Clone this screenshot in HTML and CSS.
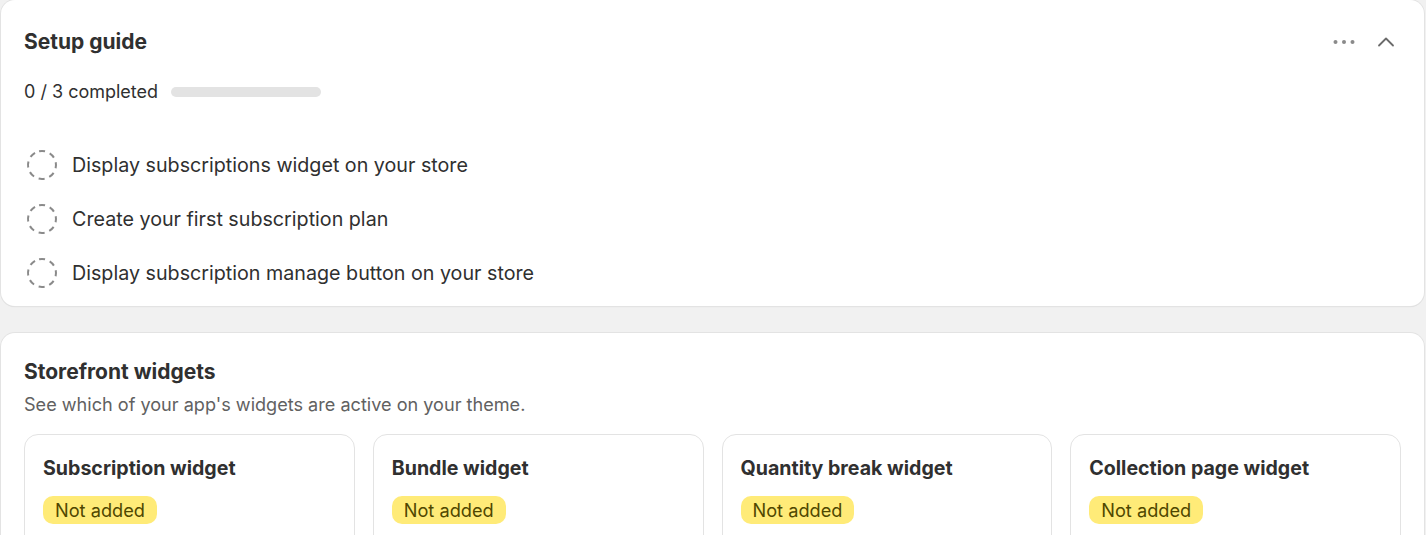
FILE: index.html
```html
<!DOCTYPE html>
<html>
<head>
<meta charset="utf-8">
<link rel="stylesheet" href="styles.css">
</head>
<body>
<div class="page">
  <section class="card setup">
    <div class="setup-head">
      <h2 class="title">Setup guide</h2>
      <div class="head-actions">
        <button class="icon-btn" aria-label="More">
          <svg width="30" height="30" viewBox="0 0 30 30"><circle cx="6.5" cy="15" r="2" fill="#8a8a8a"/><circle cx="15" cy="15" r="2" fill="#8a8a8a"/><circle cx="23.5" cy="15" r="2" fill="#8a8a8a"/></svg>
        </button>
        <button class="icon-btn" aria-label="Collapse">
          <svg width="20" height="20" viewBox="0 0 20 20"><path d="M3 13.5 L10 6.5 L17 13.5" fill="none" stroke="#6b6b6b" stroke-width="1.8" stroke-linecap="round" stroke-linejoin="round"/></svg>
        </button>
      </div>
    </div>
    <div class="progress-row">
      <span>0 / 3 completed</span>
      <div class="progress"></div>
    </div>
    <ul class="steps">
      <li><span class="dash-circle"><svg width="32" height="32" viewBox="0 0 32 32"><circle cx="16" cy="16" r="14" fill="none" stroke="#8a8a8a" stroke-width="2" stroke-dasharray="6 5" transform="rotate(-102 16 16)"/></svg></span>Display subscriptions widget on your store</li>
      <li><span class="dash-circle"><svg width="32" height="32" viewBox="0 0 32 32"><circle cx="16" cy="16" r="14" fill="none" stroke="#8a8a8a" stroke-width="2" stroke-dasharray="6 5" transform="rotate(-102 16 16)"/></svg></span>Create your first subscription plan</li>
      <li><span class="dash-circle"><svg width="32" height="32" viewBox="0 0 32 32"><circle cx="16" cy="16" r="14" fill="none" stroke="#8a8a8a" stroke-width="2" stroke-dasharray="6 5" transform="rotate(-102 16 16)"/></svg></span>Display subscription manage button on your store</li>
    </ul>
  </section>

  <section class="card widgets">
    <h2 class="title">Storefront widgets</h2>
    <p class="subtitle">See which of your app's widgets are active on your theme.</p>
    <div class="widget-grid">
      <div class="widget"><h3>Subscription widget</h3><span class="badge">Not added</span></div>
      <div class="widget"><h3>Bundle widget</h3><span class="badge">Not added</span></div>
      <div class="widget"><h3>Quantity break widget</h3><span class="badge">Not added</span></div>
      <div class="widget"><h3>Collection page widget</h3><span class="badge">Not added</span></div>
    </div>
  </section>
</div>
</body>
</html>
```

FILE: styles.css
```css
* { box-sizing: border-box; }
html, body { margin: 0; padding: 0; }
body {
  background: #f1f1f1;
  font-family: Inter, "Noto Sans", sans-serif;
  color: #303030;
}
.page {
  padding: 0 2px 0 1px;
  display: flex;
  flex-direction: column;
  gap: 27px;
}
.card {
  background: #fff;
  border-radius: 14px;
  box-shadow: 0 0 0 1px #e3e3e3, 0 1px 1px rgba(0,0,0,0.12);
  padding: 23px 23px;
}
.title {
  margin: 0;
  font-size: 21px;
  font-weight: 700;
  line-height: 30px;
  color: #303030;
}
.setup { padding-top: 27px; padding-bottom: 17px; }
.setup-head {
  display: flex;
  justify-content: space-between;
  align-items: center;
}
.head-actions { display: flex; gap: 12px; margin-right: 0; }
.icon-btn {
  width: 30px; height: 30px;
  border: 0; background: none; padding: 0;
  display: flex; align-items: center; justify-content: center;
}
.progress-row {
  display: flex;
  align-items: center;
  gap: 13px;
  margin-top: 24px;
  font-size: 18px;
  line-height: 22px;
}
.progress {
  width: 150px;
  height: 10px;
  border-radius: 5px;
  background: #e3e3e3;
}
.steps {
  list-style: none;
  margin: 46px 0 0;
  padding: 0;
  display: flex;
  flex-direction: column;
  gap: 22px;
}
.steps li {
  display: flex;
  align-items: center;
  gap: 14px;
  font-size: 19.7px;
  line-height: 32px;
}
.dash-circle { display: flex; width: 32px; height: 32px; margin-left: 2px; }
.widgets { padding-top: 24px; }
.subtitle {
  margin: 5px 0 0;
  font-size: 18.1px;
  line-height: 24px;
  color: #616161;
}
.widget-grid {
  margin-top: 18px;
  display: grid;
  grid-template-columns: repeat(4, 1fr);
  gap: 18px;
}
.widget {
  border: 1px solid #e3e3e3;
  border-radius: 14px;
  padding: 19px 18px;
  height: 140px;
}
.widget h3 {
  margin: 0;
  font-size: 19.6px;
  font-weight: 700;
  line-height: 28px;
  color: #303030;
}
.badge {
  display: inline-block;
  margin-top: 14px;
  background: #ffeb78;
  color: #4f4700;
  border-radius: 10px;
  padding: 2px 12px;
  font-size: 18.2px;
  line-height: 24px;
}
```
